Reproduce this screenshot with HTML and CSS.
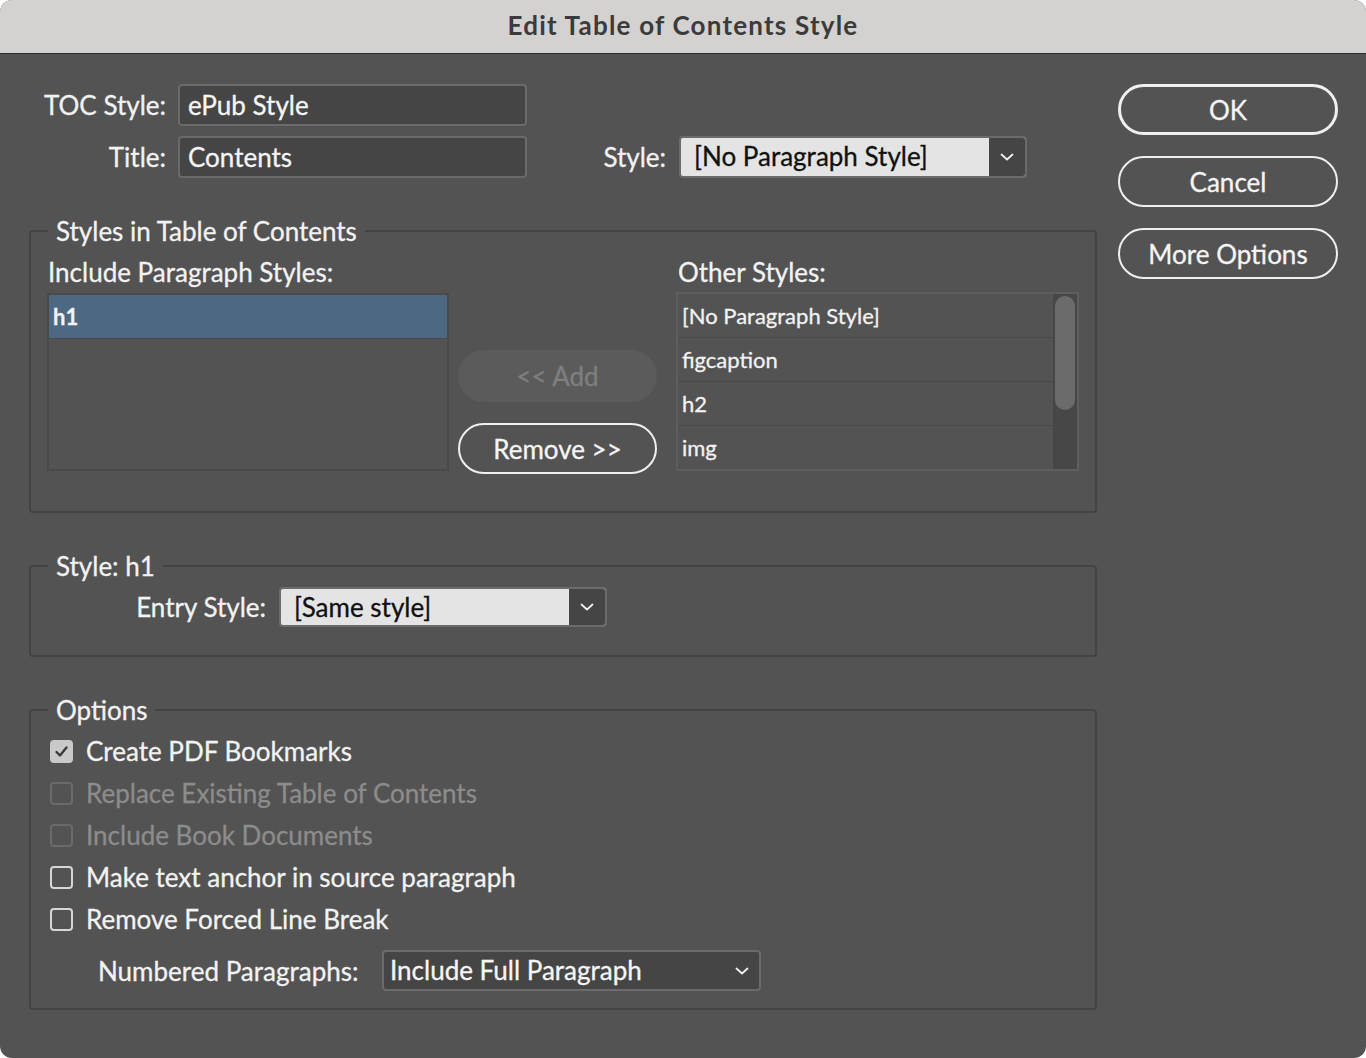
FILE: index.html
```html
<!DOCTYPE html>
<html>
<head>
<meta charset="utf-8">
<title>Edit Table of Contents Style</title>
<link rel="stylesheet" href="styles.css">
</head>
<body>
<div class="window">
  <div class="titlebar">Edit Table of Contents Style</div>
  <div class="content">
    <div class="main">
      <div class="form-row first">
        <label class="lbl">TOC Style:</label>
        <div class="textfield">ePub Style</div>
      </div>
      <div class="form-row second">
        <label class="lbl">Title:</label>
        <div class="textfield">Contents</div>
        <div class="spacer"></div>
        <label class="lbl-inline">Style:</label>
        <div class="select light style-select">
          <span class="select-value">[No Paragraph Style]</span>
          <span class="select-btn"><svg width="14" height="8" viewBox="0 0 14 8"><path d="M1.5 1.5 L7 6.5 L12.5 1.5" fill="none" stroke="#f0f0f0" stroke-width="1.8" stroke-linecap="round" stroke-linejoin="round"/></svg></span>
        </div>
      </div>

      <fieldset class="group group-styles">
        <legend>Styles in Table of Contents</legend>
        <div class="styles-cols">
          <div class="col col-left">
            <div class="col-label">Include Paragraph Styles:</div>
            <div class="list list-left">
              <div class="list-row selected">h1</div>
            </div>
          </div>
          <div class="col col-mid">
            <button class="btn disabled">&lt;&lt; Add</button>
            <button class="btn">Remove &gt;&gt;</button>
          </div>
          <div class="col col-right">
            <div class="col-label">Other Styles:</div>
            <div class="list list-right">
              <div class="list-items">
                <div class="list-row">[No Paragraph Style]</div>
                <div class="list-row">figcaption</div>
                <div class="list-row">h2</div>
                <div class="list-row last">img</div>
              </div>
              <div class="scrollbar"><div class="thumb"></div></div>
            </div>
          </div>
        </div>
      </fieldset>

      <fieldset class="group group-entry">
        <legend>Style: h1</legend>
        <div class="entry-row">
          <label class="lbl entry-lbl">Entry Style:</label>
          <div class="select light entry-select">
            <span class="select-value">[Same style]</span>
            <span class="select-btn"><svg width="14" height="8" viewBox="0 0 14 8"><path d="M1.5 1.5 L7 6.5 L12.5 1.5" fill="none" stroke="#f0f0f0" stroke-width="1.8" stroke-linecap="round" stroke-linejoin="round"/></svg></span>
          </div>
        </div>
      </fieldset>

      <fieldset class="group group-options">
        <legend>Options</legend>
        <div class="options-body">
          <div class="check-row">
            <span class="box checked"><svg width="15" height="13" viewBox="0 0 15 13"><path d="M2.5 7 L6 10.5 L12.5 2.5" fill="none" stroke="#3a3a3a" stroke-width="2.4" stroke-linecap="round" stroke-linejoin="round"/></svg></span>
            <span class="check-text">Create PDF Bookmarks</span>
          </div>
          <div class="check-row disabled">
            <span class="box"></span>
            <span class="check-text">Replace Existing Table of Contents</span>
          </div>
          <div class="check-row disabled">
            <span class="box"></span>
            <span class="check-text">Include Book Documents</span>
          </div>
          <div class="check-row">
            <span class="box"></span>
            <span class="check-text">Make text anchor in source paragraph</span>
          </div>
          <div class="check-row">
            <span class="box"></span>
            <span class="check-text">Remove Forced Line Break</span>
          </div>
          <div class="numbered-row">
            <label class="numbered-lbl">Numbered Paragraphs:</label>
            <div class="select dark numbered-select">
              <span class="select-value">Include Full Paragraph</span>
              <svg class="chev" width="14" height="8" viewBox="0 0 14 8"><path d="M1.5 1.5 L7 6.5 L12.5 1.5" fill="none" stroke="#f0f0f0" stroke-width="1.8" stroke-linecap="round" stroke-linejoin="round"/></svg>
            </div>
          </div>
        </div>
      </fieldset>
    </div>

    <div class="side">
      <button class="btn side-btn default">OK</button>
      <button class="btn side-btn">Cancel</button>
      <button class="btn side-btn">More Options</button>
    </div>
  </div>
</div>
</body>
</html>
```

FILE: styles.css
```css
* { box-sizing: border-box; }

html, body {
  margin: 0;
  padding: 0;
  background: #ffffff;
}

body {
  font-family: "Lato", "Open Sans", "Liberation Sans", sans-serif;
  font-size: 26px;
  color: #f2f2f2;
  -webkit-text-stroke: 0.3px currentColor;
}

.window {
  width: 1366px;
  height: 1058px;
  background: #535353;
  border-radius: 12px;
  overflow: hidden;
}

.titlebar {
  height: 54px;
  background: #d3d2d0;
  border-bottom: 1px solid #2c2c2c;
  color: #3b3b3b;
  font-weight: 700;
  font-size: 26px;
  letter-spacing: 1.2px;
  text-align: center;
  line-height: 50px;
  -webkit-text-stroke: 0;
}

.content {
  display: flex;
  padding-left: 29px;
}

.main {
  width: 1068px;
  display: flex;
  flex-direction: column;
}

.form-row {
  display: flex;
  align-items: center;
  height: 42px;
}
.form-row.first { margin-top: 30px; }
.form-row.second { margin-top: 10px; }

.lbl {
  width: 137px;
  text-align: right;
  margin-right: 12px;
  white-space: nowrap;
}

.textfield {
  width: 349px;
  height: 42px;
  background: #454545;
  border: 2px solid #6a6a6a;
  border-radius: 4px;
  padding-left: 8px;
  line-height: 38px;
  color: #f5f5f5;
}

.spacer { flex: 1; }

.lbl-inline {
  margin-right: 13px;
}

.select {
  display: flex;
  align-items: stretch;
  border: 2px solid #6b6b6b;
  border-radius: 4px;
  overflow: hidden;
}
.select.light {
  background: #e4e4e4;
  color: #111111;
}
.select .select-value {
  flex: 1;
  padding-left: 13px;
  white-space: nowrap;
}
.select .select-btn {
  width: 36px;
  background: #454545;
  display: flex;
  align-items: center;
  justify-content: center;
}

.style-select {
  width: 348px;
  height: 42px;
  margin-right: 70px;
  line-height: 37px;
}

/* groups */
.group {
  margin: 38px 0 0 0;
  padding: 0;
  border: 2px solid #434343;
  border-radius: 4px;
  min-width: 0;
}
.group legend {
  margin-left: 17px;
  padding: 0 8px;
  line-height: 30px;
  height: 30px;
  font-size: 26px;
}

.styles-cols {
  display: flex;
  padding: 12px 16px 37px 16px;
}
.col { display: flex; flex-direction: column; }
.col-left { width: 402px; }
.col-mid {
  width: 199px;
  margin-left: 9px;
  padding-top: 92px;
  gap: 21px;
}
.col-right {
  width: 403px;
  margin-left: 19px;
}
.col-label {
  height: 28px;
  line-height: 28px;
  margin-bottom: 7px;
  padding-left: 1px;
  white-space: nowrap;
}
.col-right .col-label { margin-bottom: 6px; padding-left: 2px; }

.list {
  height: 178px;
  border: 2px solid #4a4a4a;
  background: #535353;
}
.list-right {
  height: 179px;
  border-color: #5e5e5e;
  display: flex;
}
.list-items { flex: 1; }
.list-row {
  height: 44px;
  line-height: 44px;
  padding-left: 4px;
  font-size: 22px;
  border-bottom: 1px solid #494949;
  white-space: nowrap;
}
.list-row.last { border-bottom: none; }
.list-row.selected {
  background: #4c6882;
  font-weight: 700;
  border-bottom: 1px solid #4a4a4a;
}

.scrollbar {
  width: 24px;
  background: #474747;
  padding: 2px 2px;
}
.thumb {
  height: 114px;
  width: 20px;
  border-radius: 10px;
  background: #6b6b6b;
}

.btn {
  font-family: inherit;
  font-size: 26px;
  color: #f5f5f5;
  background: transparent;
  border: 2px solid #f0f0f0;
  border-radius: 26px;
  height: 51px;
  padding: 0;
  cursor: default;
  -webkit-text-stroke: 0.3px currentColor;
}
.btn.disabled {
  background: #5b5b5b;
  border-color: #5b5b5b;
  color: #7f7f7f;
  height: 52px;
}

/* entry group */
.entry-row {
  display: flex;
  align-items: center;
  padding: 6px 0 28px 0;
}
.entry-lbl {
  width: 235px;
  margin-right: 13px;
}
.entry-select {
  width: 328px;
  height: 40px;
  line-height: 36px;
}

/* options */
.options-body {
  padding: 5px 0 17px 19px;
}
.check-row {
  display: flex;
  align-items: center;
  height: 42px;
}
.box {
  width: 23px;
  height: 23px;
  border: 2px solid #d6d6d6;
  border-radius: 4px;
  margin-right: 13px;
  display: flex;
  align-items: center;
  justify-content: center;
  flex: none;
}
.box.checked {
  background: #c9c9c9;
  border-color: #c9c9c9;
}
.check-row.disabled { color: #8c8c8c; }
.check-row.disabled .box { border-color: #6a6a6a; }

.numbered-row {
  display: flex;
  align-items: center;
  margin-top: 10px;
  padding-left: 48px;
}
.numbered-lbl {
  width: 264px;
  margin-right: 20px;
  white-space: nowrap;
}
.select.dark {
  background: #454545;
  color: #f5f5f5;
}
.numbered-select {
  width: 379px;
  height: 41px;
  line-height: 37px;
  align-items: center;
}
.numbered-select .select-value { padding-left: 6px; }
.numbered-select .chev { margin-right: 10px; }

/* side */
.side {
  width: 220px;
  margin-left: 21px;
  padding-top: 30px;
  display: flex;
  flex-direction: column;
  gap: 21px;
}
.side-btn { width: 220px; height: 51px; }
.side-btn.default { border-width: 3px; }
```
